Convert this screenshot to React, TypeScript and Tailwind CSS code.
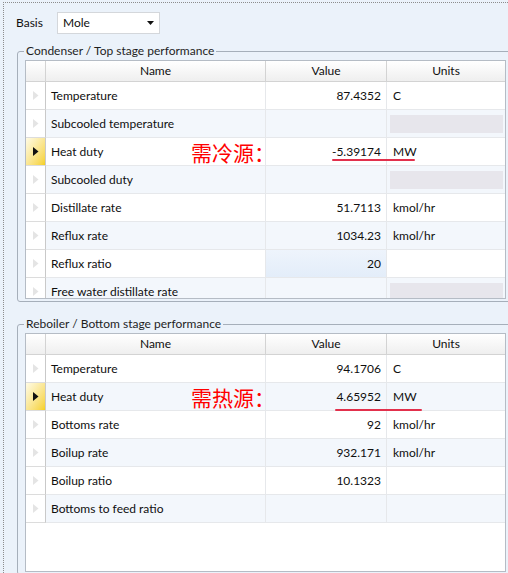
import React from "react";

type Row = {
  name: string;
  value?: string;
  unit?: string;
  blank?: boolean;
  selected?: boolean;
  tint?: boolean;
  note?: { text: string; left: number; width: number; top: number };
};

const condenser: Row[] = [
  { name: "Temperature", value: "87.4352", unit: "C" },
  { name: "Subcooled temperature", blank: true },
  {
    name: "Heat duty",
    value: "-5.39174",
    unit: "MW",
    selected: true,
    note: { text: "需冷源：", left: 306, width: 83, top: 21 },
  },
  { name: "Subcooled duty", blank: true },
  { name: "Distillate rate", value: "51.7113", unit: "kmol/hr" },
  { name: "Reflux rate", value: "1034.23", unit: "kmol/hr" },
  { name: "Reflux ratio", value: "20", tint: true },
  { name: "Free water distillate rate", blank: true },
];

const reboiler: Row[] = [
  { name: "Temperature", value: "94.1706", unit: "C" },
  {
    name: "Heat duty",
    value: "4.65952",
    unit: "MW",
    selected: true,
    note: { text: "需热源：", left: 309, width: 87, top: 26 },
  },
  { name: "Bottoms rate", value: "92", unit: "kmol/hr" },
  { name: "Boilup rate", value: "932.171", unit: "kmol/hr" },
  { name: "Boilup ratio", value: "10.1323" },
  { name: "Bottoms to feed ratio" },
];

function Arrow({ on }: { on?: boolean }) {
  return (
    <svg width="6" height="9" viewBox="0 0 6 9">
      <path d="M0 0 L5.5 4.5 L0 9 Z" fill={on ? "#111" : "#e4e4e4"} />
    </svg>
  );
}

function DataRow({ row, i }: { row: Row; i: number }) {
  return (
    <div
      className={
        "relative grid h-[28px] grid-cols-[20px_220px_121px_118px] " +
        (i % 2 ? "bg-[#f3f7fc]" : "bg-white")
      }
    >
      <div
        className={
          "flex items-center justify-center border-b border-r border-b-[#dcdcdc] border-r-[#c9c9c9] " +
          (row.selected ? "bg-gradient-to-br from-[#fffbe4] to-[#f6d10f]" : "bg-white")
        }
      >
        <Arrow on={row.selected} />
      </div>
      <div className="flex items-center border-b border-r border-[#e6e8eb] pl-[5px]">{row.name}</div>
      <div
        className={
          "flex items-center justify-end border-b border-r border-[#e6e8eb] pr-[5px] " +
          (row.tint ? "bg-gradient-to-b from-[#eef4fc] to-[#e3edf9]" : "")
        }
      >
        {row.value}
      </div>
      <div className="flex items-center border-b border-[#e6e8eb] pl-[3px] pr-[2px]">
        {row.blank ? (
          <div className="h-[18px] w-full bg-[#e7e6ec]" />
        ) : (
          <span className="pl-[3px]">{row.unit}</span>
        )}
      </div>
      {row.note && (
        <>
          <span
            className="absolute top-[3px] left-[165px] text-[21px] leading-[22px] text-[#ff0000]"
            style={{ fontFamily: '"Noto Sans CJK SC", sans-serif' }}
          >
            {row.note.text}
          </span>
          <div
            className="absolute h-[2px] rounded-full bg-[#e2304c]"
            style={{ left: row.note.left, width: row.note.width, top: row.note.top }}
          />
        </>
      )}
    </div>
  );
}

function Group({ title, rows, className }: { title: string; rows: Row[]; className?: string }) {
  return (
    <fieldset
      className={
        "w-[495px] rounded-[3px] border border-[#a6afba] pb-[2px] pl-[7px] " + (className ?? "")
      }
    >
      <legend className="-ml-[1px] px-[2px] text-[12px] leading-[16px] text-[#1e1e1e]">{title}</legend>
      <div className="mt-[1px] h-[239px] w-[481px] overflow-hidden border border-[#b5bcc5] bg-white">
        <div className="grid h-[21px] grid-cols-[20px_220px_121px_118px] bg-gradient-to-b from-white to-[#eeeeee]">
          <div className="border-b border-r border-[#d3d3d3]" />
          <div className="flex items-center justify-center border-b border-r border-[#d3d3d3]">Name</div>
          <div className="flex items-center justify-center border-b border-r border-[#d3d3d3]">Value</div>
          <div className="flex items-center justify-center border-b border-[#d3d3d3]">Units</div>
        </div>
        {rows.map((r, i) => (
          <DataRow key={r.name} row={r} i={i} />
        ))}
      </div>
    </fieldset>
  );
}

export default function App() {
  return (
    <div
      className="h-[573px] w-[508px] overflow-hidden bg-[#ebf2fa] text-[12px] text-[#0f0f0f]"
      style={{ fontFamily: 'Lato, "Noto Sans", sans-serif' }}
    >
      <div className="ml-[3px] mt-[2px] h-[571px] border-l border-t border-dotted border-[#8d8d8d] pl-[13px] pt-[9px]">
        <div className="flex h-[22px] items-center">
          <span className="-ml-[1px] w-[41px]">Basis</span>
          <div className="flex h-[22px] w-[103px] items-center justify-between border border-[#d4d7db] bg-white pl-[5px] pr-[5px]">
            <span>Mole</span>
            <svg width="7" height="4" viewBox="0 0 7 4">
              <path d="M0 0 H7 L3.5 4 Z" fill="#111" />
            </svg>
          </div>
        </div>
        <Group title="Condenser / Top stage performance" rows={condenser} className="mt-[9px]" />
        <Group title="Reboiler / Bottom stage performance" rows={reboiler} className="mt-[14px]" />
      </div>
    </div>
  );
}
